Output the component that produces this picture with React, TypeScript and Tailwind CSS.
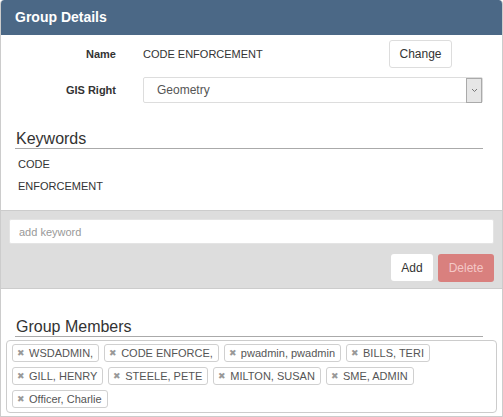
import { useState } from "react"

const members = [
  "WSDADMIN,",
  "CODE ENFORCE,",
  "pwadmin, pwadmin",
  "BILLS, TERI",
  "GILL, HENRY",
  "STEELE, PETE",
  "MILTON, SUSAN",
  "SME, ADMIN",
  "Officer, Charlie",
]

const keywords = ["CODE", "ENFORCEMENT"]

function MemberTag({ label }: { label: string }) {
  return (
    <span className="flex h-[18px] items-center rounded-[3px] border border-[#d0d0d0] bg-white pl-[4px] pr-[5px] text-[11px] leading-none text-[#555]">
      <span className="mr-[4px] text-[9px] text-[#999]">✖</span>
      {label}
    </span>
  )
}

function SectionHeading({ children }: { children: string }) {
  return (
    <div className="mr-[19px] ml-[14px] border-b border-[#aaa] pl-px text-[16px] leading-[19px] text-[#333]">
      {children}
    </div>
  )
}

export default function App() {
  const [keyword, setKeyword] = useState("")

  return (
    <div className="h-[417px] w-[503px] bg-white font-['Liberation_Sans',Arial,sans-serif] text-[11px] text-[#333]">
      <div className="flex h-full flex-col overflow-hidden rounded-t-[4px] border-x border-b border-[#ccc]">
        <div className="-mx-px flex h-[35px] shrink-0 items-center rounded-t-[4px] bg-[#4b6886] px-[15px] text-[14px] font-bold text-white">
          Group Details
        </div>

        <div className="mt-[5px] flex h-[28px] items-center">
          <span className="w-[115px] text-right font-bold">Name</span>
          <span className="ml-[27px] flex-1">CODE ENFORCEMENT</span>
          <button className="mr-[50px] h-[28px] w-[63px] rounded-[3px] border border-[#ddd] bg-white text-[12px] text-[#333]">
            Change
          </button>
        </div>

        <div className="mt-[9px] flex h-[26px] items-center">
          <span className="w-[115px] text-right font-bold">GIS Right</span>
          <div className="mr-[19px] ml-[27px] flex h-[26px] flex-1 items-center rounded-[2px] border border-[#ddd] bg-white">
            <span className="flex-1 pl-[13px] text-[12px] text-[#555]">Geometry</span>
            <span className="flex h-[25px] w-[16px] items-center justify-center border border-[#aaa] bg-[#e6e6e6]">
              <svg width="7" height="5" viewBox="0 0 7 5" fill="none">
                <path d="M1 1l2.5 2.5L6 1" stroke="#777" strokeWidth="1" />
              </svg>
            </span>
          </div>
        </div>

        <div className="mt-[26px]">
          <SectionHeading>Keywords</SectionHeading>
        </div>
        <div className="mt-[4px] pl-[17px]">
          {keywords.map((k) => (
            <div key={k} className="h-[22px] leading-[22px]">
              {k}
            </div>
          ))}
        </div>

        <div className="mt-[13px] border-y border-[#ccc] bg-[#dddddd] px-[8px] pt-[8px] pb-[6px]">
          <input
            value={keyword}
            onChange={(e) => setKeyword(e.target.value)}
            placeholder="add keyword"
            className="block h-[25px] w-full rounded-[2px] border border-[#e4e4e4] bg-white px-[9px] text-[11px] text-[#333] outline-none placeholder:text-[#999]"
          />
          <div className="mt-[10px] flex justify-end gap-[5px]">
            <button className="h-[27px] w-[42px] rounded-[3px] bg-white text-[12px] text-[#333]">Add</button>
            <button className="h-[28px] w-[56px] rounded-[3px] bg-[#d9807e] text-[12px] text-[#f4c8c7]">Delete</button>
          </div>
        </div>

        <div className="mt-[28px]">
          <SectionHeading>Group Members</SectionHeading>
        </div>
        <div className="mx-[5px] mt-[3px] flex flex-wrap content-start gap-x-[5px] gap-y-[5px] rounded-[4px] border border-[#ccc] px-[5px] pt-[3px] pb-[4px]">
          {members.map((m) => (
            <MemberTag key={m} label={m} />
          ))}
        </div>
      </div>
    </div>
  )
}
